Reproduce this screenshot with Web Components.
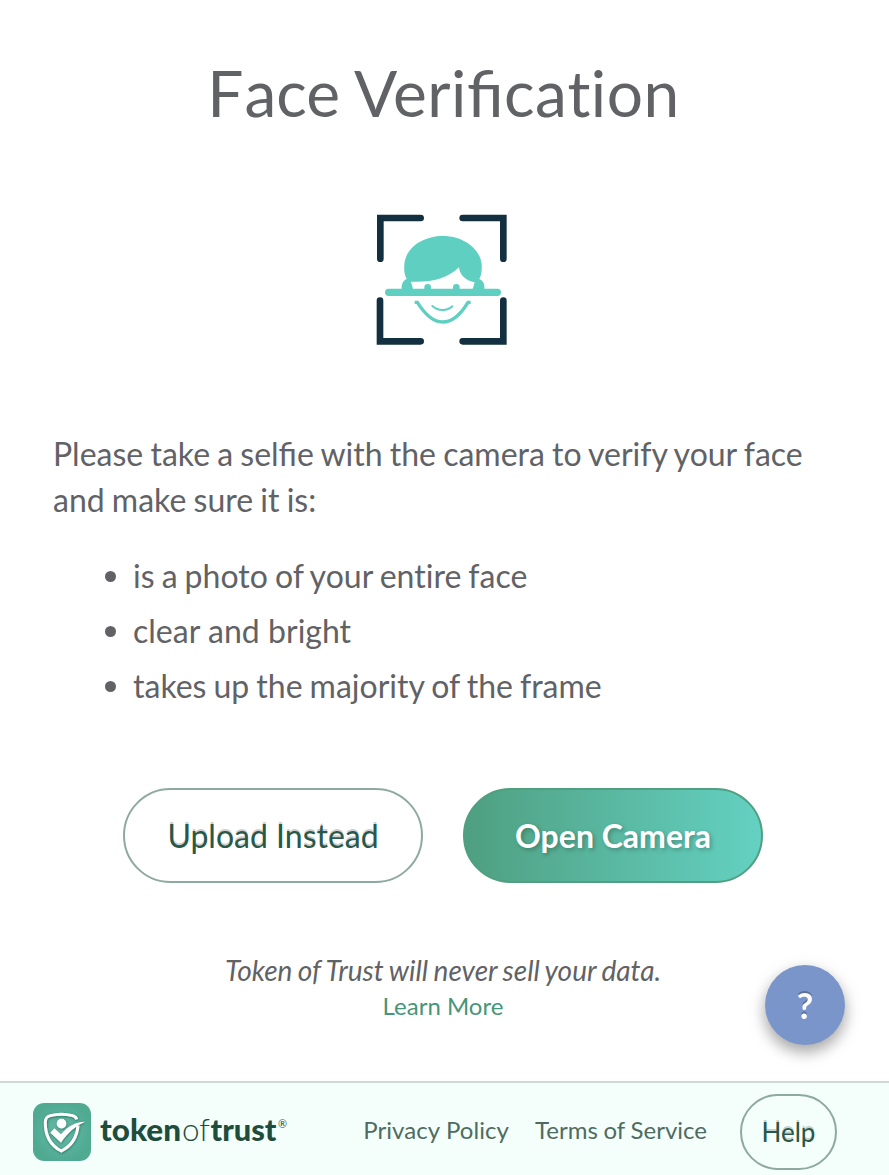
<!DOCTYPE html>
<html lang="en">
<head>
<meta charset="utf-8">
<title>Face Verification</title>
<style>
body{margin:0;background:#fff;font-family:Lato,"Liberation Sans",sans-serif;color:#616266}
</style>
</head>
<body>
<verify-page></verify-page>
<script>
function define(name, html){
  customElements.define(name, class extends HTMLElement{
    constructor(){ super(); this.attachShadow({mode:'open'}).innerHTML = html; }
  });
}

define('face-scan-icon', `
<style>:host{display:block;width:155px;height:150px}svg{display:block}</style>
<svg width="155" height="150" viewBox="0 0 465 450" fill="none">
  <g stroke="#12303f" stroke-width="20" stroke-linecap="round" stroke-linejoin="miter">
    <path d="M46 161V39H167M293 39H415V161M45 287V409H167M293 409H415V287"/>
  </g>
  <path fill="#5ecfc1" d="M125 222C117 207 117 193 118 178C122 128 174 93 234 93C296 93 346 132 350 178C351 197 349 210 343 222C354 226 360 237 358 252H323L329 232C304 228 284 211 282 187C245 222 202 232 138 230L144 252H110C109 237 115 226 125 222Z"/>
  <path fill="#5ecfc1" d="M178 252V247A10 10 0 0 1 198 247V252ZM264 252V247A10 10 0 0 1 284 247V252Z"/>
  <path stroke="#5ecfc1" stroke-width="22" stroke-linecap="round" d="M71 262H397"/>
  <path stroke="#5ecfc1" stroke-width="10" d="M149 292H157C178 325 203 351 233 351C264 351 289 325 309 292H317"/>
  <path stroke="#5ecfc1" stroke-width="6" stroke-linecap="round" d="M202 303C220 319 246 319 262 304"/>
</svg>`);

define('pill-button', `
<style>
:host{display:block;width:300px;height:95px}
button{all:unset;box-sizing:border-box;display:flex;align-items:center;justify-content:center;width:100%;height:100%;border:2px solid #8eaaa0;border-radius:48px;color:#28584a;font-size:32px;line-height:46px;text-shadow:0 -2px 0 rgba(0,0,0,.2)}
:host([primary]) button{border-color:#4f9f80;background:linear-gradient(90deg,#4f9f80,#64d1c2);color:#fff;font-weight:700;text-shadow:2px 2px 4px rgba(0,0,0,.25)}
:host([small]){width:97px;height:76px}
:host([small]) button{font-size:26px;border-radius:38px}
</style>
<button><slot></slot></button>`);

define('check-list', `
<style>
:host{display:block}
ul{list-style:none;margin:0;padding:0 0 0 51px}
li{display:flex;align-items:center;height:55px;font-size:32px;line-height:46px;word-spacing:-1.15px}
li:nth-child(1){word-spacing:-1.1px;font-variant-ligatures:none}
li:nth-child(2){word-spacing:.2px}
li::before{content:"";width:11px;height:11px;border-radius:50%;background:#616266;margin:1px 17px 0 1px}
</style>
<ul><li>is a photo of your entire face</li><li>clear and bright</li><li>takes up the majority of the frame</li></ul>`);

define('help-bubble', `
<style>
:host{position:fixed;left:765px;top:965px;width:80px;height:80px;border-radius:50%;background:#7995ca;color:#fff;display:flex;align-items:center;justify-content:center;font-size:36px;font-weight:700;line-height:44px;box-shadow:0 6px 20px rgba(0,0,0,.15),0 7px 14px rgba(0,0,0,.25);text-shadow:0 -2px 0 rgba(0,0,0,.25)}
</style><span>?</span>`);

define('brand-logo', `
<style>:host{display:flex;gap:9px;align-items:center}svg{display:block}</style>
<svg width="58" height="58" viewBox="39 98 174 174">
  <defs>
    <radialGradient id="g"><stop offset="0" stop-color="#65bba8"/><stop offset="1" stop-color="#50aa92"/></radialGradient>
    <filter id="s" x="-20%" y="-20%" width="140%" height="140%"><feDropShadow dx="1" dy="2" stdDeviation="2.5" flood-color="#174a3b" flood-opacity=".7"/></filter>
  </defs>
  <rect x="39" y="98" width="174" height="174" rx="34" fill="url(#g)"/>
  <g filter="url(#s)">
    <path d="M170 147C168 140 165 138 158 136C135 130 114 130 91 136C80 139 77 143 76 154C75 194 91 225 124 242C156 226 171 200 174 166" fill="none" stroke="#fff" stroke-width="9"/>
    <circle cx="124.500" cy="160" r="14.500" fill="#fff"/>
    <path d="M91 187L103 174L123 192C143 168 165 155 195 154C167 167 145 184 123 217Z" fill="#fff"/>
  </g>
</svg>
<svg width="190" height="58" viewBox="0 0 190 58" fill="#1f4d3d" font-family="Lato,sans-serif">
  <text x="0" y="37.500" font-size="31" font-weight="900" textLength="81" lengthAdjust="spacingAndGlyphs">token</text>
  <text x="82" y="37.500" font-size="31" font-weight="300" textLength="28" lengthAdjust="spacingAndGlyphs">of</text>
  <text x="110.500" y="37.500" font-size="31" font-weight="900" textLength="66" lengthAdjust="spacingAndGlyphs">trust</text>
  <text x="178" y="25" font-size="11" textLength="9" lengthAdjust="spacingAndGlyphs">®</text>
</svg>`);

define('page-footer', `
<style>
:host{display:flex;box-sizing:border-box;height:94px;border-top:2px solid #d0d8d5;background:#f4fffb;padding:11px 52px 0 33px;align-items:flex-start;justify-content:space-between}
brand-logo{margin-top:9px}
nav{display:flex;align-items:flex-start}
a{color:#4f6b61;font-size:24px;line-height:34px;margin:19px 26px 0 0;white-space:nowrap}
a:nth-of-type(1){letter-spacing:.07px}
a:nth-of-type(2){margin-right:33px;word-spacing:-.4px}
</style>
<brand-logo></brand-logo>
<nav><a>Privacy Policy</a><a>Terms of Service</a><pill-button small>Help</pill-button></nav>`);

define('verify-page', `
<style>
:host{display:flex;flex-direction:column;height:1175px;overflow:hidden}
main{flex:1;display:flex;flex-direction:column;padding:58px 53px 0}
h1{margin:0;text-align:center;font-weight:400;font-size:64px;line-height:70px;margin-right:2px;word-spacing:-2.5px}
h1 .f{letter-spacing:1px}
h1 .v{letter-spacing:.5px;font-feature-settings:"liga" 1}
h1 .t{font-feature-settings:"liga" 0}
face-scan-icon{margin:77px 0 0 312px}
p{margin:76px 0 0;font-size:32px;line-height:46px;word-spacing:-1px}
check-list{margin-top:25px}
.actions{display:flex;justify-content:center;gap:40px;margin:75px 3px 0 0}
.note{text-align:center;margin:67px 3px 0 0;font-size:28px;line-height:40px;font-style:italic;word-spacing:-1.1px}
.more{text-align:center;margin:-1px 3px 0 0;font-size:24px;line-height:34px;color:#45967a}
</style>
<main>
<h1><span class="f">F</span>ace <span class="v">Verifica<span class="t">tion</span></span></h1>
<face-scan-icon></face-scan-icon>
<p>Please take a selfie with the camera to verify your face and make sure it is:</p>
<check-list></check-list>
<div class="actions"><pill-button>Upload Instead</pill-button><pill-button primary>Open Camera</pill-button></div>
<div class="note">Token of Trust will never sell your data.</div>
<div class="more">Learn More</div>
</main>
<page-footer></page-footer>
<help-bubble></help-bubble>`);
</script>
</body>
</html>
